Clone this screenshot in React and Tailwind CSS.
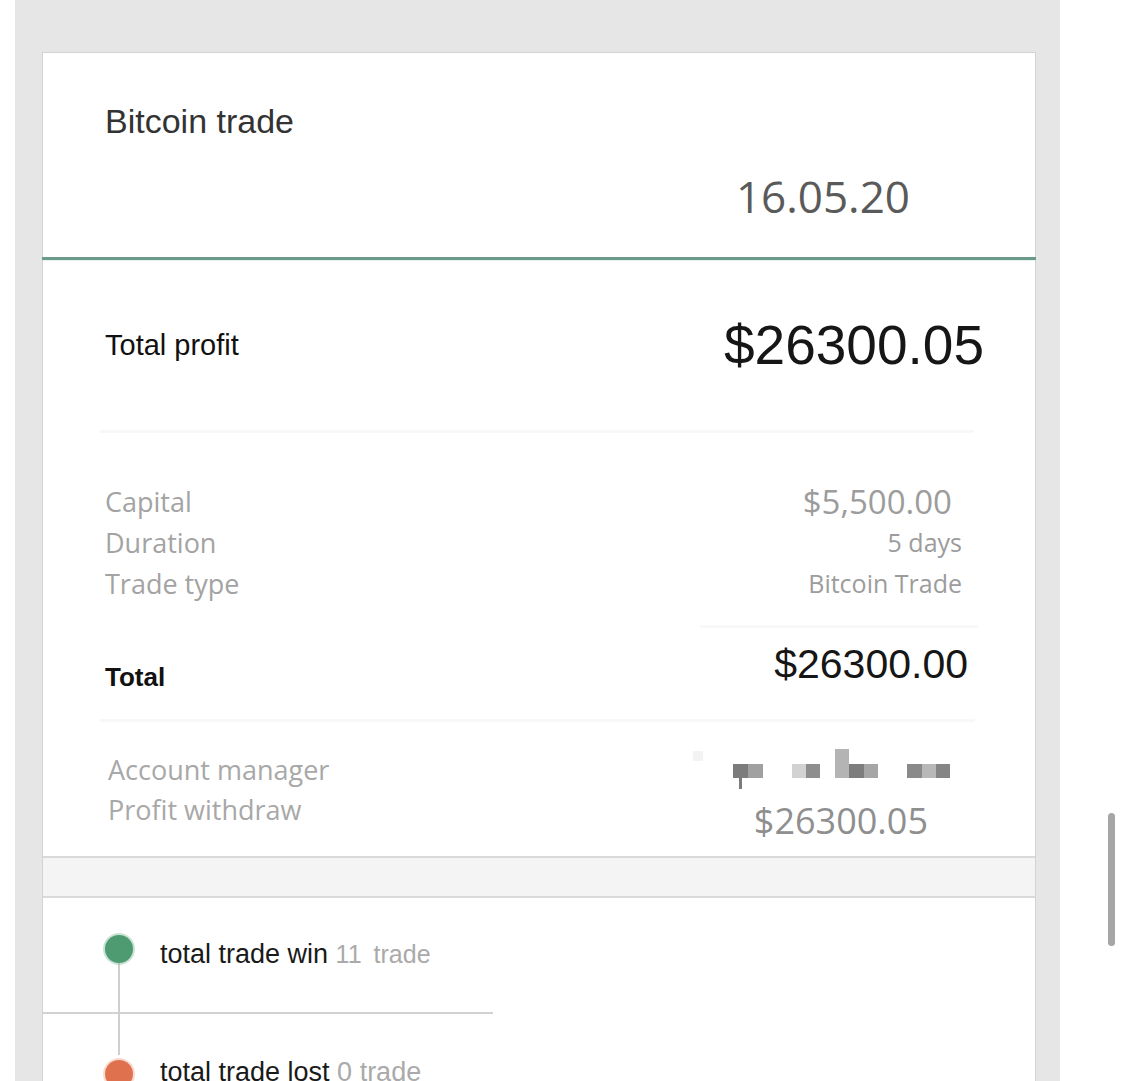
import React from "react";

const arial = { fontFamily: '"Liberation Sans", Arial, sans-serif' };
const segoe = { fontFamily: '"Open Sans", "Noto Sans", sans-serif' };

function BlurredName() {
  return (
    <svg width="265" height="44" viewBox="690 748 265 44" className="block">
      <rect x="693" y="752" width="10" height="10" fill="#f3f3f3" />
      <rect x="733" y="765" width="15" height="14" fill="#7c7c7c" />
      <rect x="748" y="765" width="15" height="14" fill="#a0a0a0" />
      <rect x="739" y="779" width="3" height="11" fill="#7c7c7c" />
      <rect x="792" y="765" width="14" height="14" fill="#d2d2d2" />
      <rect x="806" y="765" width="14" height="14" fill="#8e8e8e" />
      <rect x="835" y="750" width="14" height="29" fill="#b4b4b4" />
      <rect x="849" y="765" width="15" height="14" fill="#7d7d7d" />
      <rect x="864" y="765" width="14" height="14" fill="#a6a6a6" />
      <rect x="907" y="765" width="15" height="14" fill="#8a8a8a" />
      <rect x="922" y="765" width="14" height="14" fill="#b8b8b8" />
      <rect x="936" y="765" width="14" height="14" fill="#858585" />
    </svg>
  );
}

export default function App() {
  return (
    <div className="relative h-[1081px] w-full overflow-hidden bg-white">
      <div className="ml-[15px] h-full w-[1045px] bg-[#e6e6e6] pl-[27px] pr-[24px] pt-[52px]">
        <div className="h-full border-l border-r border-t border-[#d3d3d3] bg-white">
          {/* Header */}
          <div className="pl-[62px] pr-[125px] pt-[51px] pb-[39px]">
            <div className="text-[34px] leading-none text-[#333]" style={arial}>
              Bitcoin trade
            </div>
            <div className="mt-[36px] text-right text-[44px] leading-none text-[#5a5a5a]" style={segoe}>
              16.05.20
            </div>
          </div>
          <div className="-mx-px h-[3px] bg-[#6b9a8b]" />
          <div className="h-px bg-[#e6f3ee]" />

          {/* Total profit */}
          <div className="flex h-[169px] items-center justify-between pl-[62px] pr-[51px]">
            <div className="text-[29px] leading-none text-[#111]" style={arial}>
              Total&nbsp;profit
            </div>
            <div className="text-[55px] leading-none text-[#161616]" style={arial}>
              $26300.05
            </div>
          </div>
          <div className="ml-[57px] mr-[61px] h-[3px] bg-[#f8f8f8]" />

          {/* Details */}
          <div className="flex justify-between pl-[62px] pr-[73px] pt-[48px] pb-[21px]" style={segoe}>
            <div className="flex flex-col text-[27px] leading-[41px] text-[#a3a3a3]">
              <div>Capital</div>
              <div>Duration</div>
              <div>Trade type</div>
            </div>
            <div className="flex flex-col items-end leading-[41px] text-[#9c9c9c]">
              <div className="mr-[10px] text-[33px]">$5,500.00</div>
              <div className="text-[25px]">5 days</div>
              <div className="text-[25px]">Bitcoin Trade</div>
            </div>
          </div>
          <div className="ml-[657px] mr-[57px] h-[3px] bg-[#f8f8f8]" />

          {/* Total */}
          <div className="flex h-[91px] items-start justify-between pl-[62px] pr-[67px]" style={arial}>
            <div className="mt-[36px] text-[26px] font-bold leading-none text-[#111]">Total</div>
            <div className="mt-[16px] text-[41px] leading-none text-[#161616]">$26300.00</div>
          </div>
          <div className="ml-[57px] mr-[60px] h-[3px] bg-[#f8f8f8]" />

          {/* Account */}
          <div className="flex h-[134px] justify-between pl-[65px] pr-[80px]" style={segoe}>
            <div className="mt-[28px] flex flex-col text-[27px] leading-[40px] text-[#a8a8a8]">
              <div>Account manager</div>
              <div>Profit withdraw</div>
            </div>
            <div className="mt-[25px] flex flex-col items-end">
              <BlurredName />
              <div className="mr-[27px] mt-[12px] text-[36px] leading-none text-[#8f8f8f]">$26300.05</div>
            </div>
          </div>

          {/* gray strip */}
          <div className="h-[42px] border-t-2 border-b-2 border-[#d9d9d9] bg-[#f4f4f4]" />

          {/* Timeline */}
          <div className="relative" style={arial}>
            <div className="absolute left-[75px] top-[65px] h-[92px] w-[2px] bg-[#cfcfcf]" />
            <div className="flex items-start pl-[62px] pt-[37px] pb-[44px]">
              <div className="relative h-[28px] w-[28px] rounded-full bg-[#4e9b72] ring-2 ring-[#7db897]/40" />
              <div className="ml-[27px] mt-[6px] text-[27px] leading-none text-[#1a1a1a]">
                total trade win{" "}
                <span className="text-[25px] text-[#aaaaaa]">
                  11<span className="ml-[12px]">trade</span>
                </span>
              </div>
            </div>
            <div className="-ml-px h-[2px] w-[451px] bg-[#d2d2d2]" />
            <div className="flex items-start pl-[62px] pt-[46px]">
              <div className="relative h-[28px] w-[28px] rounded-full bg-[#e0714e] ring-2 ring-[#eea58c]/40" />
              <div className="ml-[27px] -mt-[1px] text-[27px] leading-none text-[#1a1a1a]">
                total trade lost <span className="text-[#aaaaaa]">0 trade</span>
              </div>
            </div>
          </div>
        </div>
      </div>

      {/* scrollbar */}
      <div className="absolute left-[1108px] top-[813px] h-[133px] w-[7px] rounded-full bg-[#a6a6a6]" />
    </div>
  );
}
